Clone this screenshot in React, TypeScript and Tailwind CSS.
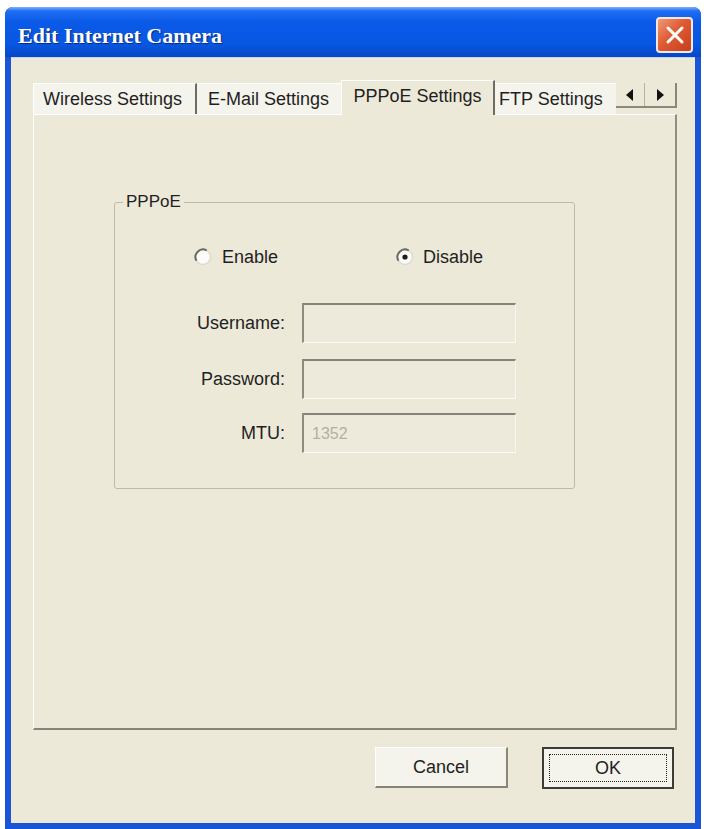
import React from "react";

const ui = "font-['Liberation_Sans',Arial,sans-serif] text-[#1f1f1f]";

function Radio({ checked }: { checked?: boolean }) {
  return (
    <svg width="20" height="20" viewBox="0 0 20 20" className="shrink-0">
      <circle cx="10" cy="10" r="7.5" fill="#fbfbf8" stroke="#dcdad0" strokeWidth="1.5" />
      <path d="M3.5 13.75 A7.5 7.5 0 0 1 13.75 3.5" fill="none" stroke="#6a6a66" strokeWidth="2" />
      {checked && <circle cx="10" cy="10" r="2.6" fill="#1f1f1f" />}
    </svg>
  );
}

function Field({ label, value, first }: { label: string; value?: string; first?: string }) {
  return (
    <div className={`flex items-center gap-[17px] ${first}`}>
      <span className="w-[170px] text-right text-[18px]">{label}</span>
      <div className="w-[214px] h-[40px] border-t-2 border-l-2 border-t-[#85837a] border-l-[#8e8c82] border-b border-r border-b-[#fbfaf4] border-r-[#f6f5ee] bg-[#edeadb] flex items-center pl-[8px]">
        {value && <span className="text-[16px] text-[#b3b0a3]">{value}</span>}
      </div>
    </div>
  );
}

export default function App() {
  return (
    <div className={`w-[704px] h-[829px] bg-white pl-[5px] pt-[7px] overflow-hidden ${ui}`}>
      <div className="w-[696px] h-[822px] flex flex-col rounded-t-[8px] bg-[#1a55d6] overflow-hidden">
        {/* title bar */}
        <div className="h-[50px] flex justify-between bg-[linear-gradient(to_bottom,#7fb2ff_0%,#1f6ef2_8%,#0a5ae8_30%,#0857e2_75%,#0647c2_100%)] pl-[13px] pr-[8px]">
          <span className="self-center mt-[6px] text-[22px] font-bold text-white font-['Liberation_Serif','Times_New_Roman',serif] [text-shadow:1px_1px_1px_#0a2a80]">
            Edit Internet Camera
          </span>
          <div className="mt-[10px] w-[37px] h-[36px] rounded-[4px] border-2 border-[#f4e8e2] bg-[linear-gradient(135deg,#f09a76_0%,#de5b33_45%,#c63f1c_100%)] flex items-center justify-center">
            <svg width="22" height="22" viewBox="0 0 22 22">
              <path d="M4 4 L18 18 M18 4 L4 18" stroke="#ffffff" strokeWidth="3" strokeLinecap="round" />
            </svg>
          </div>
        </div>

        {/* body */}
        <div className="flex-1 mx-[6px] mb-[6px] bg-[#ece9d8] pt-[25px] pl-[22px] pr-[18px] flex flex-col border-t border-[#c6d3f3]">
          {/* tabs */}
          <div className="h-[31px] flex items-end text-[18px] relative z-10">
            <div className="w-[164px] h-[31px] bg-[#f4f3ec] border-t border-l border-white border-r-2 border-r-[#6e6c64] flex items-center justify-center pr-[4px]">
              Wireless Settings
            </div>
            <div className="w-[144px] h-[31px] bg-[#f4f3ec] border-t border-white flex items-center pl-[11px]">
              E-Mail Settings
            </div>
            <div className="w-[154px] h-[35px] -mb-[1px] bg-[#ece9d8] border-t border-l border-white border-r-2 border-r-[#6e6c64] flex items-center justify-center pb-[4px]">
              PPPoE Settings
            </div>
            <div className="w-[121px] h-[31px] bg-[#f4f3ec] border-t border-white flex items-center pl-[4px] overflow-hidden whitespace-nowrap">
              FTP Settings
            </div>
            <div className="w-[61px] h-[25px] self-start flex border-b-2 border-[#8a887c] bg-[#ece9d8]">
              <div className="w-[29px] flex items-center justify-center border-r border-[#b5b3a8]">
                <svg width="8" height="12" viewBox="0 0 8 12">
                  <path d="M7 0 L0 6 L7 12 Z" fill="#111" />
                </svg>
              </div>
              <div className="flex-1 flex items-center justify-center border-r-2 border-[#8a887c]">
                <svg width="8" height="12" viewBox="0 0 8 12">
                  <path d="M1 0 L8 6 L1 12 Z" fill="#111" />
                </svg>
              </div>
            </div>
          </div>

          {/* panel */}
          <div className="h-[616px] border-t border-l border-white border-r-2 border-b-2 border-r-[#908e83] border-b-[#86847a] pl-[80px] pt-[77px]">
            <fieldset className="w-[461px] h-[297px] border border-[#bdbaac] rounded-[3px]">
              <legend className="ml-[8px] px-[3px] text-[17px] leading-[20px]">PPPoE</legend>
              <div className="flex items-center h-[20px] mt-[35px] pl-[78px] text-[18px]">
                <div className="w-[202px] flex items-center gap-[9px]">
                  <Radio />
                  <span>Enable</span>
                </div>
                <div className="flex items-center gap-[8px]">
                  <Radio checked />
                  <span>Disable</span>
                </div>
              </div>
              <Field label="Username:" first="mt-[36px]" />
              <Field label="Password:" first="mt-[16px]" />
              <Field label="MTU:" value="1352" first="mt-[14px]" />
            </fieldset>
          </div>

          {/* buttons */}
          <div className="mt-[17px] flex justify-end gap-[34px] pr-[3px] text-[18px]">
            <button className="w-[133px] h-[41px] bg-[#f4f3ec] border-t border-l border-white border-r-2 border-b-2 border-r-[#8a887c] border-b-[#85837a] flex items-center justify-center">
              Cancel
            </button>
            <button className="w-[132px] h-[42px] bg-[#f4f3ec] border-2 border-[#3b3b38] p-[5px]">
              <div className="h-full border border-dotted border-[#222] flex items-center justify-center">OK</div>
            </button>
          </div>
        </div>
      </div>
    </div>
  );
}
